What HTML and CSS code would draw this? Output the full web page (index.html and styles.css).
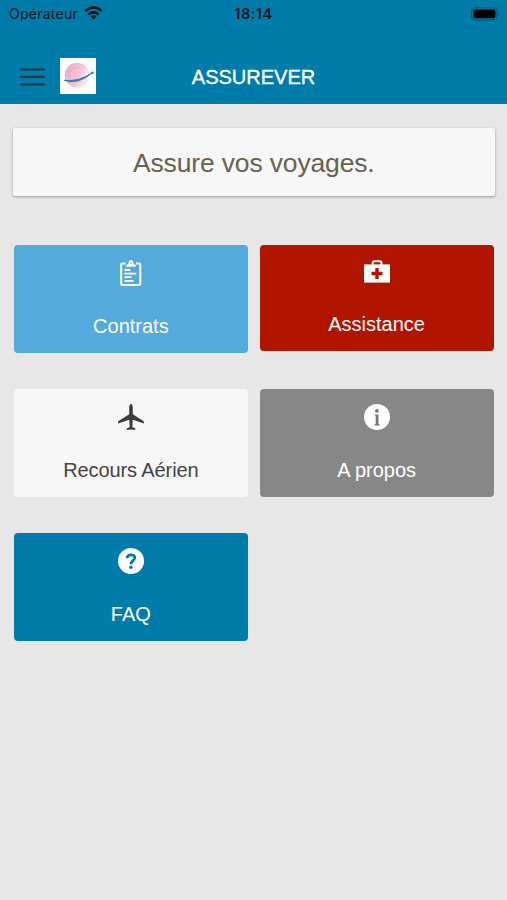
FILE: index.html
```html
<!DOCTYPE html>
<html lang="fr">
<head>
<meta charset="utf-8">
<title>Assurever</title>
<link rel="stylesheet" href="styles.css">
</head>
<body>
<header class="header">
  <div class="status">
    <div class="carrier"><span>Opérateur</span>
      <svg class="wifi" width="19" height="14" viewBox="0 0 19 14" fill="none" stroke="#03141b" stroke-width="2.8"><path d="M1.2 5Q9.5-2.2 17.8 5M4.4 8.5Q9.5 4 14.6 8.500"/><path d="M9.500 13.500L6.400 10.500Q9.500 8 12.600 10.500Z" fill="#03141b" stroke="none"/></svg>
    </div>
    <span class="clock">18:14</span>
    <svg class="battery" width="30" height="14" viewBox="0 0 30 14"><rect x=".5" y=".7" width="25.5" height="12.2" rx="3.4" fill="none" stroke="#04536f"/><rect x="2.2" y="2.4" width="22.2" height="8.8" rx="2" fill="#000"/><path d="M27.6 4.8q1.7 2 0 4z" fill="#04536f"/></svg>
  </div>
  <div class="navbar">
    <div class="nav-left">
      <svg class="menu" width="25" height="18" viewBox="0 0 25 18" stroke="#203940" stroke-width="2.2" stroke-linecap="round"><path d="M1.1 1.5h22.8M1.1 8.9h22.8M1.1 16.3h22.8"/></svg>
      <svg class="logo" width="36" height="36" viewBox="0 0 36 36"><defs><linearGradient id="globe" x1="0" x2="1" y1=".2" y2=".6"><stop offset="0" stop-color="#eda2c1"/><stop offset=".55" stop-color="#f3c0d3"/><stop offset="1" stop-color="#fdf0f4"/></linearGradient></defs><path fill="#fff" d="M0 0h36v36H0z"/><circle cx="17.2" cy="17.2" r="12.4" fill="url(#globe)"/><circle cx="17.2" cy="17.2" r="10" fill="none" stroke="#fff" stroke-opacity=".3" stroke-width="2" stroke-dasharray="1 2"/><circle cx="17.2" cy="17.2" r="5.5" fill="none" stroke="#fff" stroke-opacity=".3" stroke-width="2" stroke-dasharray="1.5 2"/><path d="M4 22.300Q18 27.500 33 14.300Q18 24.500 4 22.300Z" fill="#347fab" stroke="#347fab" stroke-width="1" stroke-linejoin="round"/><circle cx="32.600" cy="14.800" r="1.300" fill="#347fab"/></svg>
    </div>
    <h1 class="title">ASSUREVER</h1>
  </div>
</header>
<main class="content">
  <div class="banner">Assure vos voyages.</div>
  <nav class="tiles">
    <a class="tile contracts">
      <svg class="icon" viewBox="0 0 26 26"><path d="M7.500 3.500H4.500Q3.200 3.500 3.200 4.800V23.600Q3.200 24.900 4.500 24.900H21Q22.300 24.900 22.300 23.600V4.800Q22.300 3.500 21 3.500H18" fill="none" stroke="#fff" stroke-width="2"/><path fill="#fff" fill-rule="evenodd" d="M7.800 6.800Q8 4.200 10.500 3.500Q10.700 0 13 0T15.500 3.500Q18 4.200 18.200 6.800ZM13 2.200A.8 .8 0 1 0 13 3.800A.8 .8 0 1 0 13 2.200Z"/><path d="M6.600 10h5.700M6.600 13.600h11.700M6.600 17.200h7M6.600 20.800h9" stroke="#fff" stroke-width="1.800"/></svg>
      <span>Contrats</span>
    </a>
    <a class="tile assistance">
      <svg class="icon" viewBox="0 0 26 24"><path d="M8.700 5V3Q8.700 1.200 10.500 1.200H15.700Q17.500 1.200 17.500 3V5" fill="none" stroke="#fff" stroke-width="2"/><path fill="#fff" d="M0 4.400h26V22.600H0z"/><path d="M13 8v11M7.500 13.500h11" stroke="#b11500" stroke-width="3.400"/></svg>
      <span>Assistance</span>
    </a>
    <a class="tile flight">
      <svg class="icon" viewBox="0 0 26 26"><path fill="#3d3d3d" d="M13 0C14.200 0 14.800 2.100 14.800 4.200V10.300L25.400 17Q26.200 17.600 25.900 19.500L14.800 15.700L14.300 23L17.300 24.600V26.100L13 25.600L8.700 26.100V24.600L11.700 23L11.200 15.700L.1 19.500Q-.2 17.600.6 17L11.200 10.300V4.200C11.200 2.100 11.800 0 13 0Z"/></svg>
      <span>Recours Aérien</span>
    </a>
    <a class="tile about">
      <svg class="icon" viewBox="0 0 26 26"><circle cx="13" cy="13" r="13" fill="#fff"/><circle cx="12.900" cy="6.800" r="1.900" fill="#777"/><path fill="#777" d="M10.600 10.400H14.500V20L15.700 20.600V21.400H10.500V20.600L11.700 20V11.500L10.600 11.200Z"/></svg>
      <span>A propos</span>
    </a>
    <a class="tile faq">
      <svg class="icon" viewBox="0 0 26 26"><circle cx="13" cy="13" r="13" fill="#fff"/><path d="M9.200 10.200Q9.200 6.900 13 6.900T16.800 9.800C16.800 12.500 13 12.300 13 16.300" fill="none" stroke="#007cab" stroke-width="2.700"/><circle cx="12.900" cy="19.300" r="1.700" fill="#007cab"/></svg>
      <span>FAQ</span>
    </a>
  </nav>
</main>
</body>
</html>
```
FILE: styles.css
```css
* { box-sizing: border-box; }
body {
  margin: 0;
  min-height: 900px;
  background: #e7e7e7;
  font-family: "Liberation Sans", Arial, sans-serif;
}
svg { display: block; }
.header {
  height: 103.5px;
  background: #007cab;
}
.status {
  display: grid;
  grid-template-columns: 1fr auto 1fr;
  align-items: center;
  height: 27px;
  padding: 0 6px 0 9px;
  color: #03141b;
  font: 14px/27px Inter, sans-serif;
}
.carrier { display: flex; align-items: center; gap: 6px; letter-spacing: .25px; }
.wifi { margin-top: -1px; }
.clock { font-weight: 600; font-size: 14.5px; letter-spacing: .5px; padding-right: 3px; }
.battery { justify-self: end; }
.navbar {
  display: grid;
  grid-template-columns: 1fr auto 1fr;
  align-items: center;
  height: 76.5px;
  padding: 22px 20px 0;
}
.nav-left { display: flex; align-items: center; gap: 15px; margin-top: -1px; }
.menu { margin-top: 3px; }
.title {
  margin: 1px 0 0;
  color: #fff;
  font-size: 20px;
  line-height: 24px;
  font-weight: 400;
  -webkit-text-stroke: .35px #fff;
}
.content { padding: 24.500px 12.500px 0 13px; }
.banner {
  height: 68px;
  border-radius: 2px;
  background: #f7f7f7;
  box-shadow: 0 1px 3px rgba(0, 0, 0, .35);
  color: #66624f;
  font-size: 26.500px;
  letter-spacing: -.15px;
  line-height: 70px;
  text-align: center;
}
.tiles {
  display: grid;
  grid-template-columns: 1fr 1fr;
  align-items: start;
  gap: 36.500px 12px;
  padding: 49.300px 1px 0;
}
.tile {
  display: flex;
  flex-direction: column;
  align-items: center;
  gap: 27.500px;
  padding: 14.500px 0 13.500px;
  border-radius: 4px;
  color: #fff;
  font-size: 20px;
  line-height: 26px;
}
.icon { width: 26px; overflow: visible; }
.contracts { background: #54aadc; }
.assistance { background: #b11500; }
.flight { background: #f7f7f7; color: #444; letter-spacing: -.1px; }
.about { background: #878787; }
.faq { background: #007cab; }
```
